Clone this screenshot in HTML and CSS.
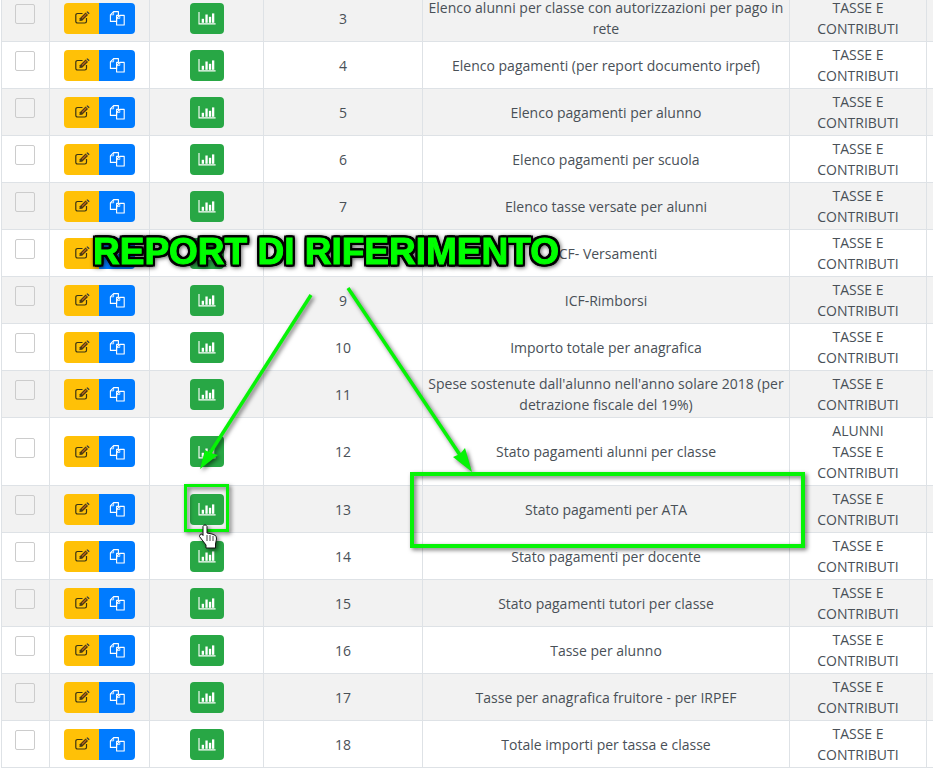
FILE: index.html
```html
<!DOCTYPE html>
<html>
  <head>
    <title>Report</title>
    <link rel="stylesheet" href="styles.css">
  </head>
  <body>
    <!-- Icon definitions -->
    <svg class="defs" width="0" height="0">
      <symbol id="ico-edit" viewBox="0 0 16 16">
        <path d="M8.5 3.5H3.5A1.7 1.7 0 0 0 1.8 5.2V11.3A1.7 1.7 0 0 0 3.5 13H10.8A1.7 1.7 0 0 0 12.5 11.3V8" fill="none" stroke="#3a3413" stroke-width="1.2"/>
        <path d="M5.8 8.2L11.6 2.6L14 5L8.2 10.8L5.4 11Z" fill="#4a3a12"/>
        <path d="M7.6 8L11.8 3.8L12.6 4.6L8.4 8.8Z" fill="#c8641a"/>
        <path d="M12.4 1.9L13.4 1.2L15.6 3.2L14.7 4.2Z" fill="#343a40"/>
      </symbol>
      <symbol id="ico-copy" viewBox="0 0 16 16">
        <path d="M4.6 1.6H9.4V5.4H7.6V11.4H1.4V4.8Z" fill="none" stroke="#fff" stroke-width="1.1" stroke-linejoin="round"/>
        <path d="M4.6 1.8V4.8H1.6" fill="none" stroke="#fff" stroke-width="0.8"/>
        <path d="M10.8 5.4H15.2V15H7.6V8.4Z" fill="none" stroke="#fff" stroke-width="1.1" stroke-linejoin="round"/>
        <path d="M10.8 5.6V8.4H7.8" fill="none" stroke="#fff" stroke-width="0.8"/>
      </symbol>
      <symbol id="ico-chart" viewBox="0 0 18 14">
        <path d="M1 1V12.9H17.6" fill="none" stroke="#fff" stroke-width="1.1"/>
        <rect x="3.7" y="7.8" width="2.3" height="4" fill="#fff"/>
        <rect x="7.4" y="3.5" width="2.3" height="8.3" fill="#fff"/>
        <rect x="10.9" y="5.8" width="2.3" height="6" fill="#fff"/>
        <rect x="14" y="2.4" width="2.3" height="9.4" fill="#fff"/>
      </symbol>
    </svg>

    <div class="page">
      <table class="report-table">
        <colgroup>
          <col class="col-check"><col class="col-actions"><col class="col-run"><col class="col-num"><col class="col-name"><col class="col-group"><col class="col-extra">
        </colgroup>
        <tbody>
          <tr>
            <td><span class="check"></span></td>
            <td><div class="btn-group"><a class="btn btn-edit"><svg class="ico"><use href="#ico-edit"/></svg></a><a class="btn btn-copy"><svg class="ico"><use href="#ico-copy"/></svg></a></div></td>
            <td><a class="btn btn-chart"><svg class="ico-chart"><use href="#ico-chart"/></svg></a></td>
            <td>3</td>
            <td>Elenco alunni per classe con autorizzazioni per pago in rete</td>
            <td>TASSE E CONTRIBUTI</td>
            <td></td>
          </tr>
          <tr>
            <td><span class="check"></span></td>
            <td><div class="btn-group"><a class="btn btn-edit"><svg class="ico"><use href="#ico-edit"/></svg></a><a class="btn btn-copy"><svg class="ico"><use href="#ico-copy"/></svg></a></div></td>
            <td><a class="btn btn-chart"><svg class="ico-chart"><use href="#ico-chart"/></svg></a></td>
            <td>4</td>
            <td>Elenco pagamenti (per report documento irpef)</td>
            <td>TASSE E CONTRIBUTI</td>
            <td></td>
          </tr>
          <tr>
            <td><span class="check"></span></td>
            <td><div class="btn-group"><a class="btn btn-edit"><svg class="ico"><use href="#ico-edit"/></svg></a><a class="btn btn-copy"><svg class="ico"><use href="#ico-copy"/></svg></a></div></td>
            <td><a class="btn btn-chart"><svg class="ico-chart"><use href="#ico-chart"/></svg></a></td>
            <td>5</td>
            <td>Elenco pagamenti per alunno</td>
            <td>TASSE E CONTRIBUTI</td>
            <td></td>
          </tr>
          <tr>
            <td><span class="check"></span></td>
            <td><div class="btn-group"><a class="btn btn-edit"><svg class="ico"><use href="#ico-edit"/></svg></a><a class="btn btn-copy"><svg class="ico"><use href="#ico-copy"/></svg></a></div></td>
            <td><a class="btn btn-chart"><svg class="ico-chart"><use href="#ico-chart"/></svg></a></td>
            <td>6</td>
            <td>Elenco pagamenti per scuola</td>
            <td>TASSE E CONTRIBUTI</td>
            <td></td>
          </tr>
          <tr>
            <td><span class="check"></span></td>
            <td><div class="btn-group"><a class="btn btn-edit"><svg class="ico"><use href="#ico-edit"/></svg></a><a class="btn btn-copy"><svg class="ico"><use href="#ico-copy"/></svg></a></div></td>
            <td><a class="btn btn-chart"><svg class="ico-chart"><use href="#ico-chart"/></svg></a></td>
            <td>7</td>
            <td>Elenco tasse versate per alunni</td>
            <td>TASSE E CONTRIBUTI</td>
            <td></td>
          </tr>
          <tr>
            <td><span class="check"></span></td>
            <td><div class="btn-group"><a class="btn btn-edit"><svg class="ico"><use href="#ico-edit"/></svg></a><a class="btn btn-copy"><svg class="ico"><use href="#ico-copy"/></svg></a></div></td>
            <td><a class="btn btn-chart"><svg class="ico-chart"><use href="#ico-chart"/></svg></a></td>
            <td>8</td>
            <td>ICF- Versamenti</td>
            <td>TASSE E CONTRIBUTI</td>
            <td></td>
          </tr>
          <tr>
            <td><span class="check"></span></td>
            <td><div class="btn-group"><a class="btn btn-edit"><svg class="ico"><use href="#ico-edit"/></svg></a><a class="btn btn-copy"><svg class="ico"><use href="#ico-copy"/></svg></a></div></td>
            <td><a class="btn btn-chart"><svg class="ico-chart"><use href="#ico-chart"/></svg></a></td>
            <td>9</td>
            <td>ICF-Rimborsi</td>
            <td>TASSE E CONTRIBUTI</td>
            <td></td>
          </tr>
          <tr>
            <td><span class="check"></span></td>
            <td><div class="btn-group"><a class="btn btn-edit"><svg class="ico"><use href="#ico-edit"/></svg></a><a class="btn btn-copy"><svg class="ico"><use href="#ico-copy"/></svg></a></div></td>
            <td><a class="btn btn-chart"><svg class="ico-chart"><use href="#ico-chart"/></svg></a></td>
            <td>10</td>
            <td>Importo totale per anagrafica</td>
            <td>TASSE E CONTRIBUTI</td>
            <td></td>
          </tr>
          <tr>
            <td><span class="check"></span></td>
            <td><div class="btn-group"><a class="btn btn-edit"><svg class="ico"><use href="#ico-edit"/></svg></a><a class="btn btn-copy"><svg class="ico"><use href="#ico-copy"/></svg></a></div></td>
            <td><a class="btn btn-chart"><svg class="ico-chart"><use href="#ico-chart"/></svg></a></td>
            <td>11</td>
            <td>Spese sostenute dall'alunno nell'anno solare 2018 (per detrazione fiscale del 19%)</td>
            <td>TASSE E CONTRIBUTI</td>
            <td></td>
          </tr>
          <tr>
            <td><span class="check"></span></td>
            <td><div class="btn-group"><a class="btn btn-edit"><svg class="ico"><use href="#ico-edit"/></svg></a><a class="btn btn-copy"><svg class="ico"><use href="#ico-copy"/></svg></a></div></td>
            <td><a class="btn btn-chart"><svg class="ico-chart"><use href="#ico-chart"/></svg></a></td>
            <td>12</td>
            <td>Stato pagamenti alunni per classe</td>
            <td>ALUNNI<br>TASSE E CONTRIBUTI</td>
            <td></td>
          </tr>
          <tr>
            <td><span class="check"></span></td>
            <td><div class="btn-group"><a class="btn btn-edit"><svg class="ico"><use href="#ico-edit"/></svg></a><a class="btn btn-copy"><svg class="ico"><use href="#ico-copy"/></svg></a></div></td>
            <td><a class="btn btn-chart"><svg class="ico-chart"><use href="#ico-chart"/></svg></a></td>
            <td>13</td>
            <td>Stato pagamenti per ATA</td>
            <td>TASSE E CONTRIBUTI</td>
            <td></td>
          </tr>
          <tr>
            <td><span class="check"></span></td>
            <td><div class="btn-group"><a class="btn btn-edit"><svg class="ico"><use href="#ico-edit"/></svg></a><a class="btn btn-copy"><svg class="ico"><use href="#ico-copy"/></svg></a></div></td>
            <td><a class="btn btn-chart"><svg class="ico-chart"><use href="#ico-chart"/></svg></a></td>
            <td>14</td>
            <td>Stato pagamenti per docente</td>
            <td>TASSE E CONTRIBUTI</td>
            <td></td>
          </tr>
          <tr>
            <td><span class="check"></span></td>
            <td><div class="btn-group"><a class="btn btn-edit"><svg class="ico"><use href="#ico-edit"/></svg></a><a class="btn btn-copy"><svg class="ico"><use href="#ico-copy"/></svg></a></div></td>
            <td><a class="btn btn-chart"><svg class="ico-chart"><use href="#ico-chart"/></svg></a></td>
            <td>15</td>
            <td>Stato pagamenti tutori per classe</td>
            <td>TASSE E CONTRIBUTI</td>
            <td></td>
          </tr>
          <tr>
            <td><span class="check"></span></td>
            <td><div class="btn-group"><a class="btn btn-edit"><svg class="ico"><use href="#ico-edit"/></svg></a><a class="btn btn-copy"><svg class="ico"><use href="#ico-copy"/></svg></a></div></td>
            <td><a class="btn btn-chart"><svg class="ico-chart"><use href="#ico-chart"/></svg></a></td>
            <td>16</td>
            <td>Tasse per alunno</td>
            <td>TASSE E CONTRIBUTI</td>
            <td></td>
          </tr>
          <tr>
            <td><span class="check"></span></td>
            <td><div class="btn-group"><a class="btn btn-edit"><svg class="ico"><use href="#ico-edit"/></svg></a><a class="btn btn-copy"><svg class="ico"><use href="#ico-copy"/></svg></a></div></td>
            <td><a class="btn btn-chart"><svg class="ico-chart"><use href="#ico-chart"/></svg></a></td>
            <td>17</td>
            <td>Tasse per anagrafica fruitore - per IRPEF</td>
            <td>TASSE E CONTRIBUTI</td>
            <td></td>
          </tr>
          <tr>
            <td><span class="check"></span></td>
            <td><div class="btn-group"><a class="btn btn-edit"><svg class="ico"><use href="#ico-edit"/></svg></a><a class="btn btn-copy"><svg class="ico"><use href="#ico-copy"/></svg></a></div></td>
            <td><a class="btn btn-chart"><svg class="ico-chart"><use href="#ico-chart"/></svg></a></td>
            <td>18</td>
            <td>Totale importi per tassa e classe</td>
            <td>TASSE E CONTRIBUTI</td>
            <td></td>
          </tr>
        </tbody>
      </table>

      <!-- Annotations drawn over the screenshot -->
      <svg class="notes" width="933" height="768" viewBox="0 0 933 768">
        <g class="note-shapes">
          <g fill="none" stroke="#06f306">
            <rect x="185.5" y="485.5" width="42" height="45" stroke-width="3"/>
            <rect x="412" y="474" width="391" height="72" stroke-width="4"/>
            <path d="M311 295L210 453" stroke-width="3.5"/>
            <path d="M348 288L462 458" stroke-width="3.5"/>
          </g>
          <g fill="#06f306">
            <path d="M200 469L205 450L211 453L218 455Z"/>
            <path d="M472 472L453 457L460 454L465 448Z"/>
          </g>
        </g>
        <!-- Hand cursor -->
        <path class="note-shapes" d="M203 526.500Q205 523 207 526.500V533L212 534L215.500 535.500Q216.500 536.500 216.500 539L215.500 544V548H206V545L199.500 536.500Q199.500 533.500 202 534L203 535.500Z" fill="#fff" stroke="#111" stroke-width="1"/>
        <path d="M207 535V541M210 535V541M213 536V541" stroke="#111" stroke-width="0.8" fill="none"/>
      </svg>
      <div class="note-title">REPORT DI RIFERIMENTO</div>
    </div>
  </body>
</html>
```

FILE: styles.css
```css
html, body {
  margin: 0;
  padding: 0;
  background: #fff;
}
body {
  font-family: "Open Sans", Arial, sans-serif;
  font-size: 14px;
  line-height: 21px;
  color: #495057;
}
.defs {
  display: block;
}
.page {
  position: relative;
  width: 933px;
  height: 768px;
  overflow: hidden;
}

/* table */
.report-table {
  border-collapse: collapse;
  table-layout: fixed;
  width: 940px;
  margin: -6px 0 0 1px;
}
.report-table td {
  border: 1px solid #dee2e6;
  padding: 2px;
  text-align: center;
  vertical-align: middle;
}
.report-table tr:nth-child(odd) {
  background: #f2f2f2;
}
.col-check { width: 48px; }
.col-actions { width: 100px; }
.col-run { width: 114px; }
.col-num { width: 159px; }
.col-name { width: 367px; }
.col-group { width: 137px; }

.check {
  display: block;
  box-sizing: border-box;
  width: 20px;
  height: 20px;
  margin: 0 0 8px 11px;
  border: 1px solid #ccc;
  border-radius: 2px;
  background: #fff;
}
.report-table tr:nth-child(odd) .check {
  background: #f2f2f2;
}

/* buttons */
.btn-group {
  display: flex;
  justify-content: center;
}
.btn {
  display: flex;
  align-items: center;
  justify-content: center;
  height: 31px;
  box-sizing: border-box;
}
.btn-edit {
  width: 35px;
  background: #ffc107;
  border-radius: 4px 0 0 4px;
}
.btn-copy {
  width: 36px;
  background: #007bff;
  border-radius: 0 4px 4px 0;
}
.btn-chart {
  width: 34px;
  margin: 0 auto;
  background: #28a745;
  border-radius: 4px;
}
.ico {
  width: 16px;
  height: 16px;
}
.ico-chart {
  width: 18px;
  height: 14px;
}

/* annotations */
.notes {
  position: absolute;
  left: 0;
  top: 0;
}
.note-shapes {
  filter: drop-shadow(2px 2px 2px rgba(0, 0, 0, 0.55));
}
.note-title {
  position: absolute;
  left: 93px;
  top: 231px;
  font-family: "Liberation Sans", Arial, sans-serif;
  font-weight: bold;
  font-size: 37px;
  line-height: 42px;
  white-space: nowrap;
  color: #00ff00;
  -webkit-text-stroke: 1px #00ff00;
  filter: drop-shadow(2px 0 0 #000) drop-shadow(-2px 0 0 #000) drop-shadow(0 2px 0 #000) drop-shadow(0 -2px 0 #000) drop-shadow(1px 1px 2px rgba(0, 0, 0, 0.6));
}
```
